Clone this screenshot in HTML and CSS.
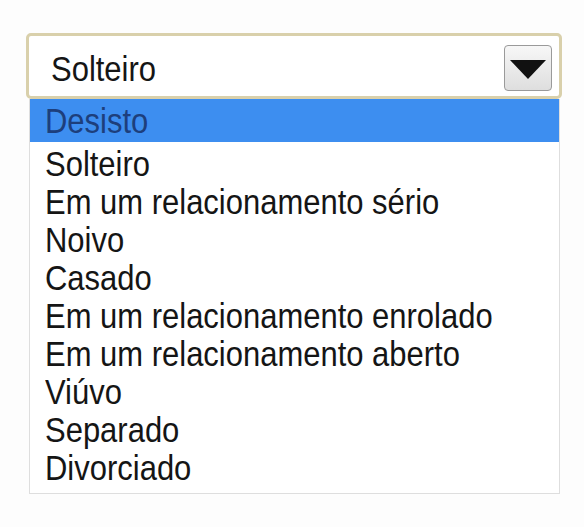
FILE: index.html
```html
<!DOCTYPE html>
<html lang="pt">
<head>
<meta charset="utf-8">
<title>Estado civil</title>
<link rel="stylesheet" href="styles.css">
</head>
<body>
<div class="widget">
  <div class="select">
    <span class="txt">Solteiro</span>
    <div class="btn">
      <svg width="36" height="19" viewBox="0 0 36 19"><polygon points="0,0 36,0 18,19" fill="#111"/></svg>
    </div>
  </div>
  <div class="list">
    <div class="opt hl"><span class="txt">Desisto</span></div>
    <div class="rest">
      <div class="opt"><span class="txt">Solteiro</span></div>
      <div class="opt"><span class="txt">Em um relacionamento sério</span></div>
      <div class="opt"><span class="txt">Noivo</span></div>
      <div class="opt"><span class="txt">Casado</span></div>
      <div class="opt"><span class="txt">Em um relacionamento enrolado</span></div>
      <div class="opt"><span class="txt">Em um relacionamento aberto</span></div>
      <div class="opt"><span class="txt">Viúvo</span></div>
      <div class="opt"><span class="txt">Separado</span></div>
      <div class="opt"><span class="txt">Divorciado</span></div>
    </div>
  </div>
</div>
</body>
</html>
```
FILE: styles.css
```css
html, body {
  margin: 0;
  background: #fdfdfd;
}
body {
  font-family: "Liberation Sans", Arial, sans-serif;
  color: #151515;
  font-size: 35px;
}
.widget {
  padding: 33px 0 0 26px;
  width: 536px;
}
.txt {
  display: inline-block;
  transform: scaleX(0.885);
  transform-origin: left center;
  white-space: nowrap;
}
.select {
  box-sizing: border-box;
  height: 66px;
  border: 3px solid #d9d0ab;
  border-radius: 5px;
  background: #fff;
  display: flex;
  align-items: center;
  justify-content: space-between;
  padding-left: 22px;
  padding-right: 7px;
  line-height: 38px;
}
.select .txt {
  margin-top: 5px;
}
.btn {
  box-sizing: border-box;
  width: 48px;
  height: 46px;
  margin-top: 4px;
  border: 1px solid #9a9a9a;
  border-radius: 4px;
  background: linear-gradient(#f7f7f7, #dedede);
  display: flex;
  align-items: center;
  justify-content: center;
}
.btn svg {
  display: block;
  margin-top: 2px;
}
.list {
  margin: 0 2px 0 3px;
  border: 1px solid #dedede;
  border-top: none;
  background: #fff;
  padding-bottom: 6px;
}
.opt {
  line-height: 38px;
  padding-left: 15px;
}
.opt.hl {
  background: #3d8ef0;
  color: #1d3f7c;
  padding-top: 3px;
  padding-bottom: 2px;
}
.rest {
  padding-top: 3px;
}
```
